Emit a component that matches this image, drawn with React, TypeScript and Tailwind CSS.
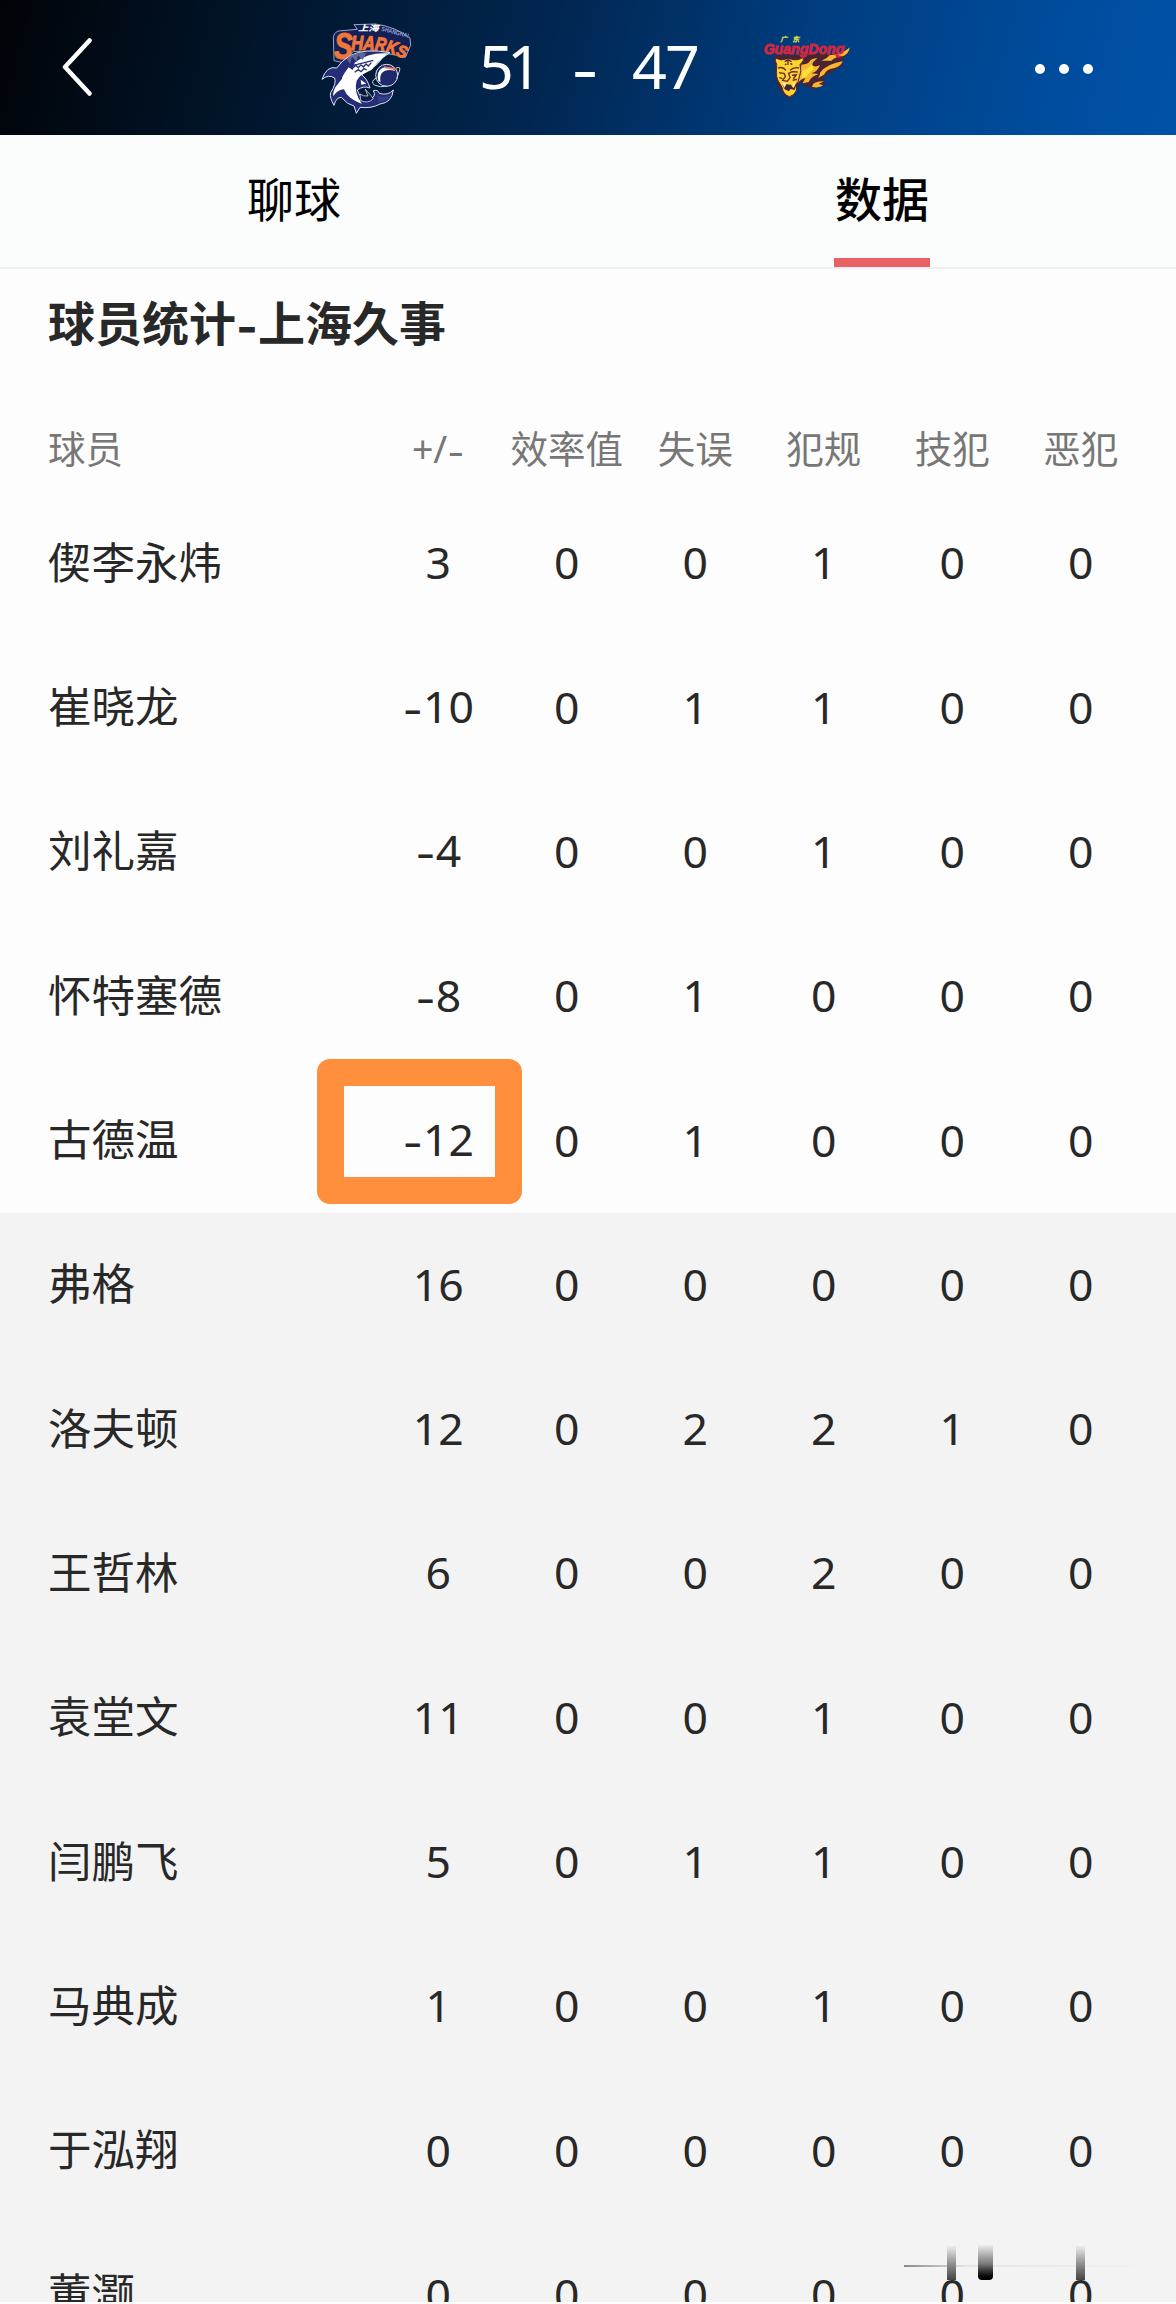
import React from 'react';

interface Player {
  name: string;
  stats: string[];
  highlighted?: boolean;
}

const columns = ['+/-', '效率值', '失误', '犯规', '技犯', '恶犯'];

const starters: Player[] = [
  { name: '偰李永炜', stats: ['3', '0', '0', '1', '0', '0'] },
  { name: '崔晓龙', stats: ['-10', '0', '1', '1', '0', '0'] },
  { name: '刘礼嘉', stats: ['-4', '0', '0', '1', '0', '0'] },
  { name: '怀特塞德', stats: ['-8', '0', '1', '0', '0', '0'] },
  {
    name: '古德温',
    stats: ['-12', '0', '1', '0', '0', '0'],
    highlighted: true,
  },
];

const bench: Player[] = [
  { name: '弗格', stats: ['16', '0', '0', '0', '0', '0'] },
  { name: '洛夫顿', stats: ['12', '0', '2', '2', '1', '0'] },
  { name: '王哲林', stats: ['6', '0', '0', '2', '0', '0'] },
  { name: '袁堂文', stats: ['11', '0', '0', '1', '0', '0'] },
  { name: '闫鹏飞', stats: ['5', '0', '1', '1', '0', '0'] },
  { name: '马典成', stats: ['1', '0', '0', '1', '0', '0'] },
  { name: '于泓翔', stats: ['0', '0', '0', '0', '0', '0'] },
  { name: '董灏', stats: ['0', '0', '0', '0', '0', '0'] },
];

const SharksLogo = () => {
  return (
    <svg viewBox="0 0 360 330" className="h-[110px] w-[120px] shrink-0">
      <path
        d="M72 152 L70 80 Q74 62 96 62 L142 58 L132 44 L196 42 Q256 50 300 84 L302 106 L286 142 L262 136 L212 128 L130 124 L98 158 Z"
        fill="#141f55"
        stroke="#b4c2e0"
        strokeWidth="2.500"
      />
      <text
        x="144"
        y="63"
        fill="#fff"
        fontSize="24"
        fontWeight="900"
        fontStyle="italic"
        fontFamily="Noto Sans CJK SC, sans-serif"
        textLength="62"
        lengthAdjust="spacingAndGlyphs"
      >
        上海
      </text>
      <text
        x="213"
        y="62"
        fill="#8f9fce"
        fontSize="19"
        fontWeight="700"
        fontFamily="Liberation Sans, sans-serif"
        textLength="84"
        lengthAdjust="spacingAndGlyphs"
        transform="rotate(15 213 62)"
      >
        SHANGHAI
      </text>
      <g
        fill="#f0763a"
        stroke="#f0763a"
        strokeWidth="3"
        fontWeight="900"
        fontStyle="italic"
        fontFamily="Liberation Sans, sans-serif"
      >
        <text x="72" y="148" fontSize="108" textLength="56" lengthAdjust="spacingAndGlyphs">
          S
        </text>
        <text x="124" y="121" fontSize="62" textLength="36" lengthAdjust="spacingAndGlyphs">
          H
        </text>
        <text x="158" y="119" fontSize="61" textLength="35" lengthAdjust="spacingAndGlyphs" transform="rotate(4 158 119)">
          A
        </text>
        <text x="193" y="121" fontSize="59" textLength="33" lengthAdjust="spacingAndGlyphs" transform="rotate(9 193 121)">
          R
        </text>
        <text x="225" y="127" fontSize="56" textLength="33" lengthAdjust="spacingAndGlyphs" transform="rotate(15 225 127)">
          K
        </text>
        <text x="256" y="136" fontSize="51" textLength="31" lengthAdjust="spacingAndGlyphs" transform="rotate(20 256 136)">
          S
        </text>
      </g>
      {/* body */}
      <path
        d="M240 128 Q166 114 122 136 Q94 152 80 174 Q50 166 36 208 Q56 192 74 204 Q80 220 62 248 Q58 262 72 286 Q78 262 94 262 Q112 284 132 288 L139 310 L150 292 Q186 296 210 282 Q246 278 250 240 Q234 258 208 250 Q204 238 190 242 Q202 262 174 268 Q150 268 142 240 Q160 226 180 234 Q172 206 154 194 Q186 180 204 160 Q216 140 240 128 Z"
        fill="#252c78"
        stroke="#dbe3f5"
        strokeWidth="3"
        strokeLinejoin="round"
      />
      <path
        d="M234 130 Q176 126 134 158 L128 180 L116 172 Q96 198 96 206 L76 232 Q68 248 70 258 Q84 238 102 238 Q112 266 156 282 Q130 246 140 212 Q150 192 184 180 Q200 158 234 130 Z"
        fill="#fff"
      />
      <path
        d="M130 166 L190 151 M128 174 L138 166 L145 173 L153 164 L160 171 L168 162 L175 168 L184 158 M134 187 L145 179 L153 185 L162 176 L170 180"
        fill="none"
        stroke="#252c78"
        strokeWidth="4"
      />
      <path d="M110 146 Q134 126 168 130 L158 150 L144 136 L140 156 L126 140 L120 162 Z" fill="#616895" />
      <path d="M152 209 L169 221 L154 224 Z" fill="#fff" />
      <path
        d="M150 252 Q160 260 174 258 L166 238 L184 258 L190 266 Q174 282 152 272 Z"
        fill="#0a1c48"
        stroke="#fff"
        strokeWidth="2"
      />
      <path d="M204 276 Q234 274 243 254 Q225 264 202 258 Z" fill="#343f84" />
      {/* ball */}
      <circle cx="230" cy="196" r="33" fill="#1d286d" stroke="#dbe3f5" strokeWidth="3" />
      <path
        d="M258 174 Q274 168 268 184 L260 206 M199 204 Q180 214 193 225 Q210 234 231 228"
        fill="none"
        stroke="#c9d3ea"
        strokeWidth="3"
      />
      <path
        d="M205 213 Q198 184 217 174 Q238 164 257 184 Q230 174 215 190 Q208 200 212 217 Z"
        fill="#fff"
      />
      <path d="M222 169 L258 174 L262 181 L224 175 Z" fill="#e77758" />
    </svg>
  );
};

const TigersLogo = () => {
  return (
    <svg viewBox="0 0 330 270" className="h-[90px] w-[110px] shrink-0">
      <path
        d="M72 106 L270 100 L300 82 L276 124 L278 136 L220 172 L224 194 L188 208 L150 186 L138 216 L118 236 L96 220 L80 190 Z"
        fill="#4b2433"
      />
      <text
        x="90"
        y="67"
        fill="#d8e04b"
        fontSize="22"
        fontWeight="900"
        fontStyle="italic"
        fontFamily="Noto Sans CJK SC, sans-serif"
        textLength="58"
      >
        广东
      </text>
      {/* flames */}
      <path
        d="M154 134 Q176 134 182 120 Q188 116 202 114 L184 132 Q190 144 210 136 Q202 156 184 160 L206 162 Q182 170 176 186 L158 190 L166 174 Q150 178 144 190 L152 160 Z M214 122 Q234 114 238 106 Q268 106 298 84 Q290 104 276 108 Q258 110 244 122 Z M210 158 Q230 132 278 124 Q274 138 254 144 Q230 146 222 164 L204 174 Q212 166 210 158 Z M186 200 Q188 184 222 184 L206 192 L220 196 Q206 206 186 200 Z"
        fill="#fbb62f"
      />
      <path d="M158 151 Q178 148 189 126 Q183 145 193 146 Q176 157 170 169 L155 176 Z" fill="#fde138" />
      {/* head */}
      <path
        d="M78 114 Q92 124 108 117 L123 117 Q140 124 160 112 Q164 122 150 134 Q156 152 148 170 Q146 188 136 194 L140 210 Q132 228 118 230 Q100 224 96 202 L88 188 Q76 174 80 142 Q82 134 76 122 Z"
        fill="#fcd42d"
        stroke="#572232"
        strokeWidth="3"
      />
      <path
        d="M104 125 L114 120 L125 125 M114 119 V135 M109 131 L105 135 M121 130 L127 134 M84 144 Q99 139 108 151 M120 151 Q132 140 147 144 M87 158 L103 161 L106 170 L98 181 L112 184 L120 173 L116 160 L126 155 L143 156 M88 173 L97 176 M126 166 L139 164 L130 177 M128 181 L141 178"
        fill="none"
        stroke="#632634"
        strokeWidth="4"
      />
      <path d="M96 192 L103 201 L108 193 L123 194 L129 204 L137 193 L134 210 L122 207 L116 214 L104 208 Z" fill="#432335" />
      <path d="M96 188 L104 204 L109 189 Z M128 190 L131 205 L138 187 Z" fill="#fff0a4" />
      <text
        x="41"
        y="102"
        fill="#cf2741"
        stroke="#cf2741"
        strokeWidth="3"
        fontSize="46"
        fontWeight="900"
        fontStyle="italic"
        fontFamily="Liberation Sans, sans-serif"
        textLength="242"
        lengthAdjust="spacingAndGlyphs"
      >
        GuangDong
      </text>
      <path d="M264 105 Q282 104 299 82 Q298 100 278 109 Z" fill="#fdbb32" />
    </svg>
  );
};

const Header = () => {
  return (
    <header className="flex h-[135px] shrink-0 items-center bg-[linear-gradient(105deg,#010307_0%,#01152b_22%,#012650_46%,#003d80_68%,#004fa3_93%,#0052a8_100%)]">
      <svg viewBox="0 0 30 58" fill="none" className="-mt-[2px] ml-[62px] h-[58px] w-[30px]">
        <path d="M27.500 2.500 L3 29 L27.500 55.500" stroke="#fff" strokeWidth="4.500" strokeLinecap="round" strokeLinejoin="round" />
      </svg>
      <div className="ml-[218px] flex items-center pb-[5px]">
        <SharksLogo />
        <div className="flex w-[320px] items-center pl-[49px] text-[61px] leading-none text-white">
          <span className="w-[64px] tracking-[-7px]">51</span>
          <span className="ml-[28px] flex w-[28px] translate-y-[6px] justify-center font-['Inter']">-</span>
          <span className="ml-[33px] tracking-[-2px]">47</span>
        </div>
        <TigersLogo />
      </div>
      <div className="ml-[175px] flex gap-[14px] pt-[2px]">
        <span className="size-[10px] rounded-full bg-white" />
        <span className="size-[10px] rounded-full bg-white" />
        <span className="size-[10px] rounded-full bg-white" />
      </div>
    </header>
  );
};

const Tabs = () => {
  return (
    <nav className="flex h-[134px] shrink-0 border-b-2 border-[#eff1f1] bg-[#fbfcfc] text-[47px] leading-none text-black">
      <div className="flex flex-1 flex-col items-center pt-[41px]">聊球</div>
      <div className="flex flex-1 flex-col items-center justify-between pt-[41px] font-medium">
        <span>数据</span>
        <span className="h-[9px] w-[96px] bg-[#ea6163]" />
      </div>
    </nav>
  );
};

const Hyphen = () => {
  return <span className="inline-block translate-y-[3px] font-['Inter']">-</span>;
};

const StatValue = ({ value }: { value: string }) => {
  const negative = value.startsWith('-');
  return (
    <span className="whitespace-nowrap">
      {negative && <Hyphen />}
      {negative ? value.slice(1) : value}
    </span>
  );
};

const PlayerRow = ({ name, stats, highlighted }: Player) => {
  return (
    <div className="relative grid h-[144.300px] shrink-0 grid-cols-[326px_repeat(6,128.500px)] items-center pb-[3px] text-[#282828]">
      <span className="text-[43.500px] leading-none">{name}</span>
      {stats.map((value, i) => (
        <span key={i} className="text-center text-[44.500px] leading-none">
          <StatValue value={value} />
        </span>
      ))}
      {highlighted && (
        <div className="absolute top-[-10px] left-[269px] h-[145px] w-[205px] rounded-[13px] border-[27px] border-[#ff8f3c]" />
      )}
    </div>
  );
};

/* dark smudges left over by the share watermark */
const WatermarkStreaks = () => {
  return (
    <div className="absolute top-[2245px] left-[904px] h-[35px] w-[248px]">
      <div className="absolute top-[20px] h-[2px] w-full bg-linear-to-r from-[#8a8a8a] via-[#e4e4e4] via-25% to-transparent" />
      <div className="absolute left-[43px] h-full w-[9px] bg-linear-to-b from-[#f3f3f3] to-[#444]" />
      <div className="absolute left-[74px] h-full w-[15px] rounded-b-[4px] bg-linear-to-b from-[#ededed] via-[#777] via-55% to-black" />
      <div className="absolute left-[172px] h-full w-[9px] bg-linear-to-b from-[#f3f3f3] to-[#444]" />
    </div>
  );
};

const App = () => {
  return (
    <div className="relative h-[2304px] w-[1176px] overflow-hidden bg-white font-['Noto_Sans','Noto_Sans_CJK_SC',sans-serif]">
      <div className="flex h-[2302px] flex-col overflow-hidden bg-[#f3f3f3]">
        <Header />
        <Tabs />
        <section className="shrink-0 bg-[#fdfdfd] pl-12">
          <h1 className="pt-[31px] text-[47px] leading-[46px] font-bold text-[#282828]">
            球员统计
            <Hyphen />
            上海久事
          </h1>
          <div className="mt-[81px] mb-[22px] grid h-[42px] grid-cols-[326px_repeat(6,128.500px)] items-center text-[37.500px] leading-none text-[#777]">
            <span>球员</span>
            {columns.map((label) => (
              <span key={label} className="text-center whitespace-nowrap">
                {label.replace('-', '')}
                {label.endsWith('-') && <Hyphen />}
              </span>
            ))}
          </div>
          {starters.map((player) => (
            <PlayerRow key={player.name} {...player} />
          ))}
        </section>
        <section className="shrink-0 pl-12">
          {bench.map((player) => (
            <PlayerRow key={player.name} {...player} />
          ))}
        </section>
      </div>
      <WatermarkStreaks />
    </div>
  );
};

export default App;
